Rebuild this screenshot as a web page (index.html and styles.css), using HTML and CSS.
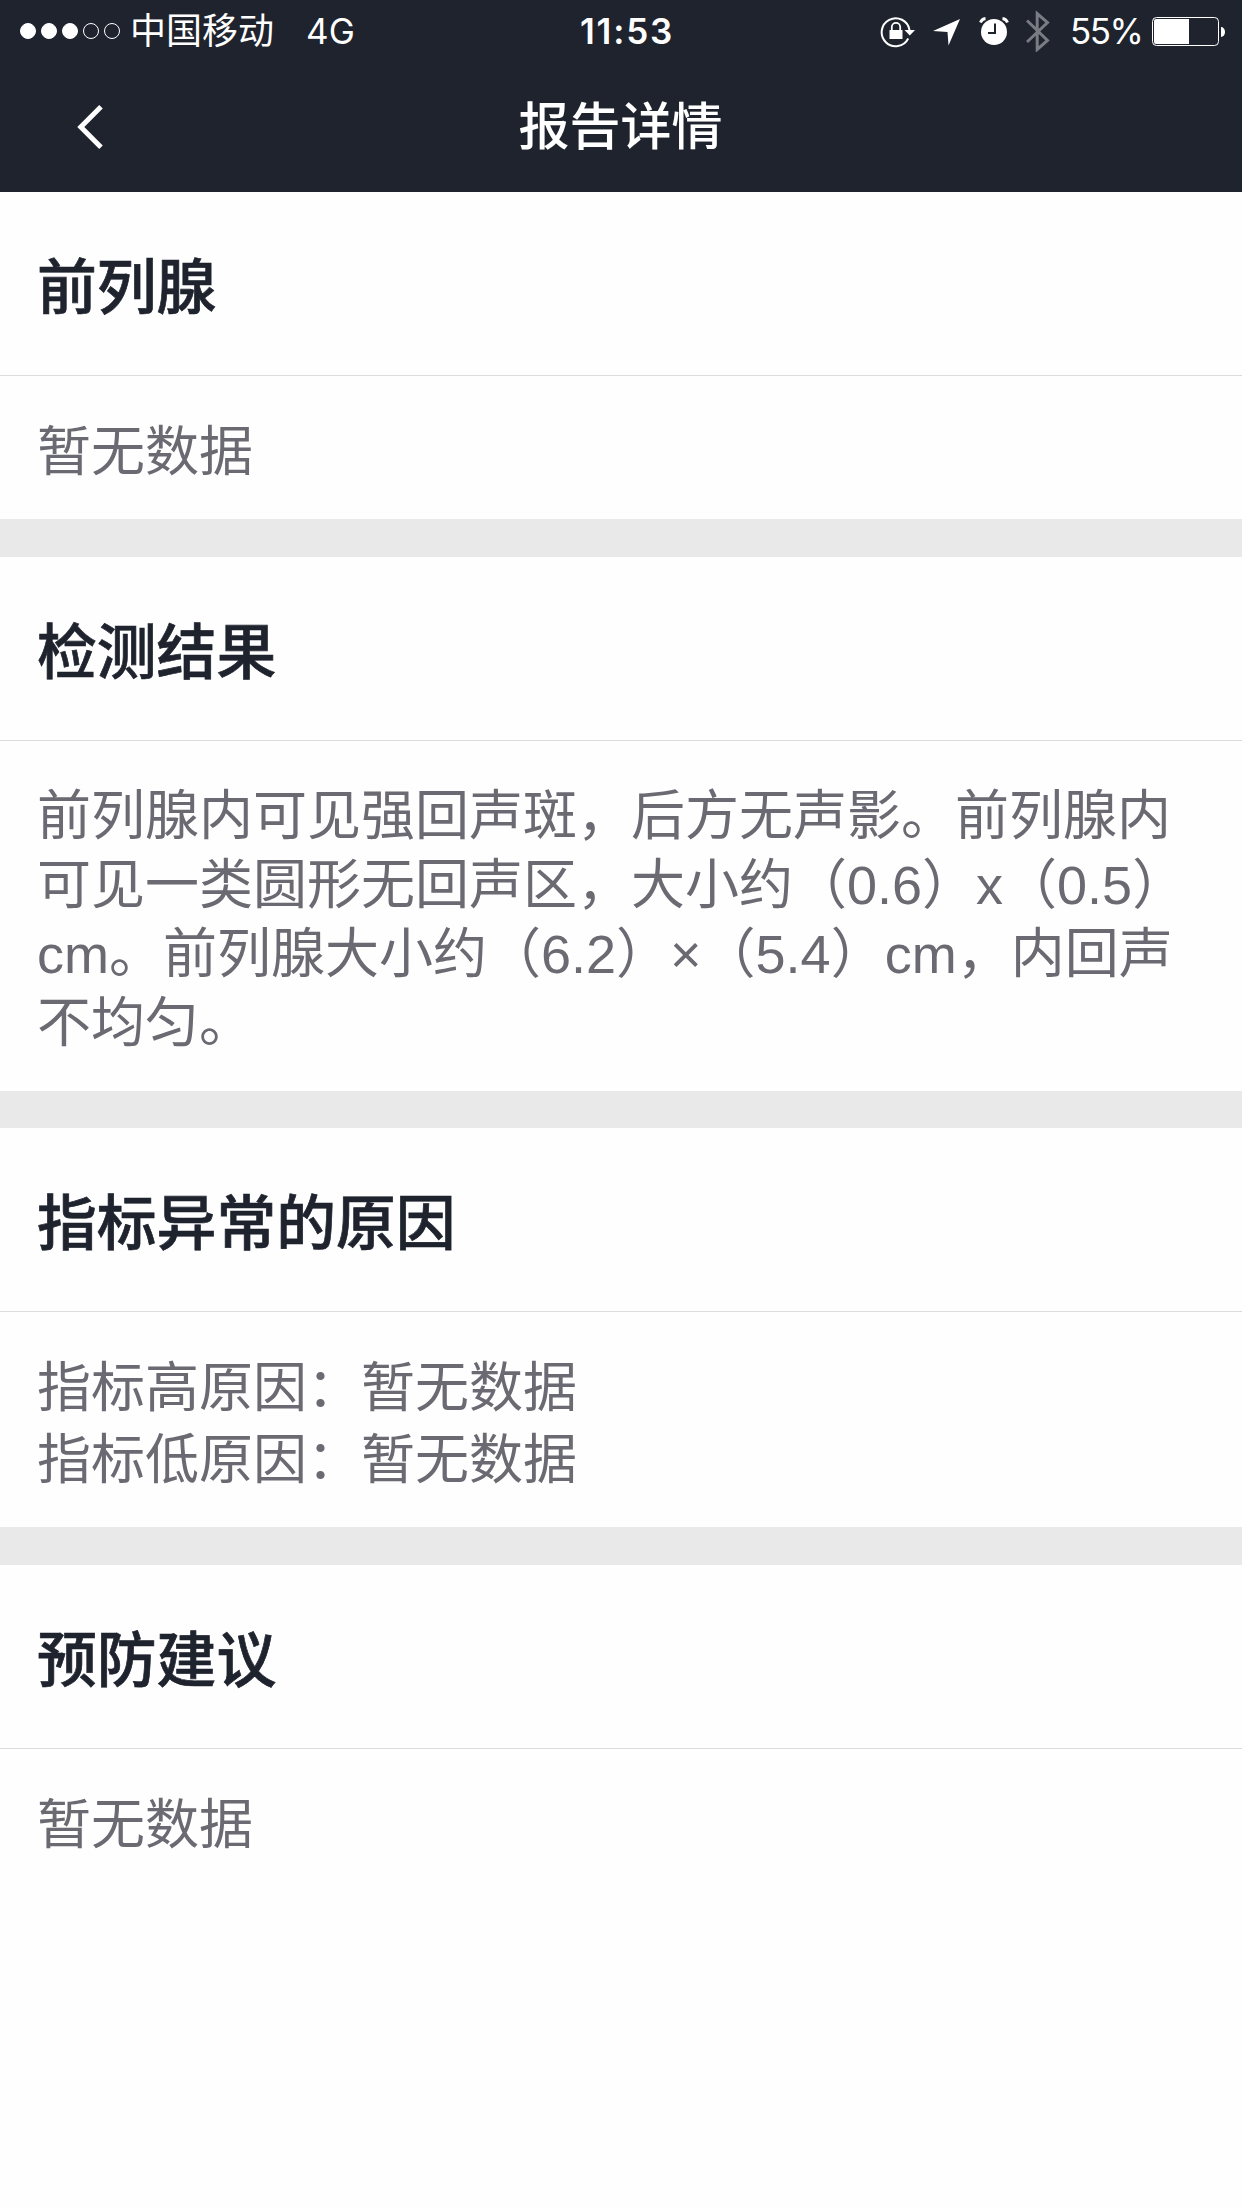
FILE: index.html
```html
<!DOCTYPE html>
<html lang="zh-CN">
<head>
    <meta charset="UTF-8">
    <meta name="viewport" content="width=device-width, initial-scale=1.0">
    <title>报告详情</title>
    <link rel="stylesheet" href="styles.css">
</head>
<body>
    <header class="header">
        <!-- Status Bar -->
        <div class="status-bar">
            <div class="status-left">
                <div class="signal">
                    <span class="dot full"></span>
                    <span class="dot full"></span>
                    <span class="dot full"></span>
                    <span class="dot"></span>
                    <span class="dot"></span>
                </div>
                <span class="carrier">中国移动</span>
                <span class="network">4G</span>
            </div>
            <div class="time">11:53</div>
            <div class="status-right">
                <svg class="icon-lock" width="36" height="42" viewBox="880 9 36 42">
                    <path d="M908.2 37.5A14 14 0 1 1 909.5 29" fill="none" stroke="#fff" stroke-width="2"/>
                    <path d="M904.5 29h10.5l-5.2 5.5z" fill="#fff"/>
                    <path d="M889.5 29h13v9h-13z" fill="#fff"/>
                    <path d="M891.8 30v-4a4.2 4.2 0 0 1 8.4 0v4" fill="none" stroke="#fff" stroke-width="1.8"/>
                </svg>
                <svg class="icon-location" width="28" height="42" viewBox="933 9 28 42">
                    <path d="M960 18L933 30l14.500 1L948.500 44.500z" fill="#fff"/>
                </svg>
                <svg class="icon-alarm" width="30" height="42" viewBox="979 9 30 42">
                    <circle cx="994" cy="31" r="13" fill="#fff"/>
                    <path d="M980.500 21.500a6 6 0 0 1 5-4M1007.500 21.500a6 6 0 0 0-5-4" fill="none" stroke="#fff" stroke-width="2.800"/>
                    <path d="M995 22.500v9.500h-7" fill="none" stroke="#1e232d" stroke-width="2"/>
                </svg>
                <svg class="icon-bluetooth" width="24" height="42" viewBox="1026 9 24 42">
                    <path d="M1027 19.500L1047.500 39.500L1037.200 48.500V12.500L1047.500 21.500L1027 41" fill="none" stroke="#797c82" stroke-width="3"/>
                </svg>
                <span class="percent">55%</span>
                <svg class="icon-battery" width="74" height="42" viewBox="1152 9 74 42">
                    <rect x="1152.500" y="16.500" width="66" height="28" rx="4" fill="none" stroke="#fff"/>
                    <path d="M1156 18h33v25h-33a2 2 0 0 1-2-2V20a2 2 0 0 1 2-2z" fill="#fff"/>
                    <path d="M1221 26a4 5 0 0 1 0 10z" fill="#fff"/>
                </svg>
            </div>
        </div>

        <!-- Title Bar -->
        <div class="nav-bar">
            <svg class="back" width="26" height="46" viewBox="0 0 26 46">
                <path d="M24 2.800L3.800 23L24 43.200" fill="none" stroke="#fff" stroke-width="5"/>
            </svg>
            <div class="nav-title">报告详情</div>
        </div>
    </header>

    <section class="section">
        <h2>前列腺</h2>
        <div class="content">暂无数据</div>
    </section>

    <section class="section">
        <h2>检测结果</h2>
        <div class="content detail">前列腺内可见强回声斑，后方无声影。前列腺内可见一类圆形无回声区，大小约（0.6）x（0.5）cm。前列腺大小约（6.2）×（5.4）cm，内回声不均匀。</div>
    </section>

    <section class="section reason-section">
        <h2>指标异常的原因</h2>
        <div class="content reasons">
            <p>指标高原因：暂无数据</p>
            <p>指标低原因：暂无数据</p>
        </div>
    </section>

    <section class="section">
        <h2>预防建议</h2>
        <div class="content">暂无数据</div>
    </section>
</body>
</html>
```

FILE: styles.css
```css
/* General Styles */
* {
    box-sizing: border-box;
}

body {
    font-family: "Liberation Sans", "Noto Sans CJK SC", sans-serif;
    background-color: #fefefe;
    color: #6b6a72;
    margin: 0;
    padding: 0;
    text-spacing-trim: space-all;
}

/* Header */
.header {
    height: 192px;
    background: #1e232d;
    color: #ffffff;
}

.status-bar {
    display: grid;
    grid-template-columns: 1fr auto 1fr;
    align-items: center;
    height: 60px;
    padding: 0 16px 0 20px;
    font-family: Inter, "Noto Sans CJK SC", sans-serif;
    font-size: 36px;
    line-height: 60px;
}

.status-left,
.status-right {
    display: flex;
    align-items: center;
}

.status-right {
    justify-content: flex-end;
}

.signal {
    display: flex;
    gap: 5px;
}

.dot {
    width: 16px;
    height: 16px;
    border: 1px solid #ffffff;
    border-radius: 50%;
}

.dot.full {
    background: #ffffff;
}

.carrier,
.network,
.time,
.percent {
    padding-top: 1px;
}

.carrier {
    margin-left: 10px;
    font-weight: 400;
}

.network {
    margin-left: 32px;
    font-size: 35px;
    font-weight: 400;
}

.time {
    padding-left: 8px;
    font-size: 35px;
    font-weight: 600;
    letter-spacing: 1.8px;
}

.icon-lock {
    margin-right: 17px;
}

.icon-location {
    margin-right: 18px;
}

.icon-alarm {
    margin-right: 17px;
}

.icon-bluetooth {
    margin-right: 20px;
}

.percent {
    width: 82px;
    font-size: 35px;
    font-weight: 400;
    letter-spacing: -1.5px;
    white-space: nowrap;
}

.nav-bar {
    display: grid;
    grid-template-columns: 26px 1fr 26px;
    align-items: center;
    height: 132px;
    padding: 1px 78px 0 77px;
}

.nav-title {
    padding-top: 2px;
    text-align: center;
    font-size: 51px;
    font-weight: 500;
    line-height: 72px;
}

/* Report Sections */
.section + .section {
    border-top: 38px solid #e9e9e9;
}

.section + .reason-section {
    border-top-width: 37px;
}

h2 {
    height: 184px;
    margin: 0;
    padding: 0 37px;
    border-bottom: 1px solid #dcdcdc;
    color: #1e232d;
    font-size: 59.8px;
    font-weight: 500;
    line-height: 193px;
    -webkit-text-stroke: 0.7px #1e232d;
}

.content {
    padding: 42px 37px 32px;
    font-size: 54px;
    line-height: 69px;
}

.detail {
    padding: 41px 37px 33px;
}

.reasons {
    padding: 40px 37px 31px;
    line-height: 72px;
}

.reasons p {
    margin: 0;
}
```
